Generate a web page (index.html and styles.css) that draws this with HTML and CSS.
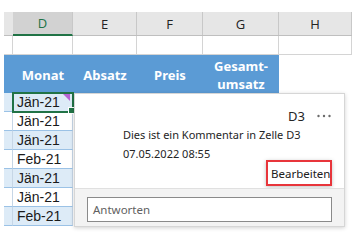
FILE: index.html
```html
<!DOCTYPE html>
<html lang="de">

<head>
    <meta charset="UTF-8">
    <meta name="viewport" content="width=device-width, initial-scale=1.0">
    <title>Kommentar</title>
    <link rel="stylesheet" href="styles.css">
</head>

<body>
    <div class="sheet">
        <div class="row heads">
            <div class="cell"></div>
            <div class="cell sel">D</div>
            <div class="cell">E</div>
            <div class="cell">F</div>
            <div class="cell">G</div>
            <div class="cell">H</div>
        </div>
        <div class="row blank">
            <div class="cell"></div>
            <div class="cell"></div>
            <div class="cell"></div>
            <div class="cell"></div>
            <div class="cell"></div>
            <div class="cell"></div>
        </div>
        <div class="row titles">
            <div class="cell"></div>
            <div class="cell">Monat</div>
            <div class="cell">Absatz</div>
            <div class="cell">Preis</div>
            <div class="cell">Gesamt-<br>umsatz</div>
            <div class="cell empty"></div>
        </div>
        <div class="row data alt">
            <div class="cell"></div>
            <div class="cell active">Jän-21</div>
        </div>
        <div class="row data">
            <div class="cell"></div>
            <div class="cell">Jän-21</div>
        </div>
        <div class="row data alt">
            <div class="cell"></div>
            <div class="cell">Jän-21</div>
        </div>
        <div class="row data">
            <div class="cell"></div>
            <div class="cell">Feb-21</div>
        </div>
        <div class="row data alt">
            <div class="cell"></div>
            <div class="cell">Jän-21</div>
        </div>
        <div class="row data">
            <div class="cell"></div>
            <div class="cell">Jän-21</div>
        </div>
        <div class="row data alt">
            <div class="cell"></div>
            <div class="cell">Feb-21</div>
        </div>
    </div>

    <!-- comment thread card, floats over the sheet -->
    <div class="comment">
        <div class="thread">
            <div class="thread-head">
                <span class="ref">D3</span>
                <svg class="more" width="14" height="4" viewBox="0 0 14 4">
                    <circle cx="1.5" cy="2" r="1.2" fill="#6b6b6b" />
                    <circle cx="7" cy="2" r="1.2" fill="#6b6b6b" />
                    <circle cx="12.5" cy="2" r="1.2" fill="#6b6b6b" />
                </svg>
            </div>
            <p class="text">Dies ist ein Kommentar in Zelle D3</p>
            <p class="date">07.05.2022 08:55</p>
            <div class="actions">
                <button class="edit">Bearbeiten</button>
            </div>
        </div>
        <div class="reply">
            <div class="reply-box">Antworten</div>
        </div>
    </div>
</body>

</html>
```

FILE: styles.css
```css
* {
    margin: 0;
    padding: 0;
    box-sizing: border-box;
}

body {
    width: 352px;
    height: 241px;
    overflow: hidden;
    background-color: #ffffff;
    font-family: 'Noto Sans', sans-serif;
    position: relative;
}

.sheet {
    padding: 12px 0 0 4px;
}

.row {
    display: grid;
    grid-template-columns: 9px 60px 64px 66px 76px 73px;
}

.heads {
    height: 24px;
    background-color: #e6e6e6;
    border-bottom: 1px solid #bfbfbf;
    font-family: 'Open Sans', sans-serif;
    font-size: 13px;
    color: #222222;
}

.heads .cell {
    display: flex;
    align-items: center;
    justify-content: center;
    border-right: 1px solid #c8c8c8;
}

.heads .cell:first-child {
    border-right: none;
}

.heads .sel {
    background-color: #d2d2d2;
    color: #217346;
    border-bottom: 2px solid #217346;
    margin-bottom: -1px;
}

.blank {
    height: 19px;
}

.blank .cell {
    border-right: 1px solid #d4d4d4;
    border-bottom: 1px solid #d4d4d4;
}

.titles {
    height: 38px;
    font-size: 13px;
    font-weight: bold;
    color: #ffffff;
    line-height: 18px;
}

.titles .cell {
    background-color: #5b9bd5;
    display: flex;
    align-items: center;
    justify-content: center;
    text-align: center;
    padding-top: 2px;
}

.titles .cell.empty {
    background-color: #ffffff;
}

.data {
    height: 19px;
    font-family: 'Liberation Sans', sans-serif;
    font-size: 14px;
    color: #1a1a1a;
}

.data .cell {
    border-bottom: 1px solid #9bc2e6;
    border-right: 1px solid #c6d6e6;
    line-height: 18px;
    padding-left: 4px;
}

.data.alt .cell {
    background-color: #ddebf7;
}

.data .active {
    position: relative;
    outline: 2px solid #217346;
    outline-offset: -1px;
    z-index: 1;
}

.data .active::before {
    content: '';
    position: absolute;
    top: 1px;
    right: 2px;
    border-top: 7px solid #b764d4;
    border-left: 7px solid transparent;
}

.data .active::after {
    content: '';
    position: absolute;
    right: -3px;
    bottom: -3px;
    width: 5px;
    height: 5px;
    background-color: #217346;
    border: 1px solid #ffffff;
}

.comment {
    position: absolute;
    left: 74px;
    top: 93px;
    width: 271px;
    height: 134px;
    background-color: #ffffff;
    border: 1px solid #d6d6d6;
    box-shadow: 0 1px 4px rgba(0, 0, 0, 0.18);
    display: flex;
    flex-direction: column;
    z-index: 2;
    font-size: 11px;
    color: #252525;
}

.thread {
    height: 94px;
    padding: 13px 12px 0 48px;
}

.thread-head {
    display: flex;
    justify-content: flex-end;
    align-items: center;
    gap: 12px;
    height: 18px;
    font-size: 13px;
}

.thread-head .more {
    margin-right: 1px;
}

.text,
.date {
    line-height: 19px;
}

.actions {
    display: flex;
    justify-content: flex-end;
    margin-top: -3px;
}

.edit {
    font-family: 'Noto Sans', sans-serif;
    font-size: 11.5px;
    color: #202020;
    background-color: #ffffff;
    border: 2px solid #e8353b;
    box-shadow: 0 1px 4px rgba(0, 0, 0, 0.25);
    padding: 2px 3px;
    height: 26px;
    width: 66px;
}

.reply {
    flex: 1;
    background-color: #f3f3f3;
    border-top: 1px solid #e0e0e0;
    padding: 8px 12px 0 12px;
}

.reply-box {
    height: 25px;
    background-color: #ffffff;
    border: 1px solid #8a8a8a;
    padding-left: 5px;
    line-height: 23px;
    font-size: 11.5px;
    color: #616161;
}
```
